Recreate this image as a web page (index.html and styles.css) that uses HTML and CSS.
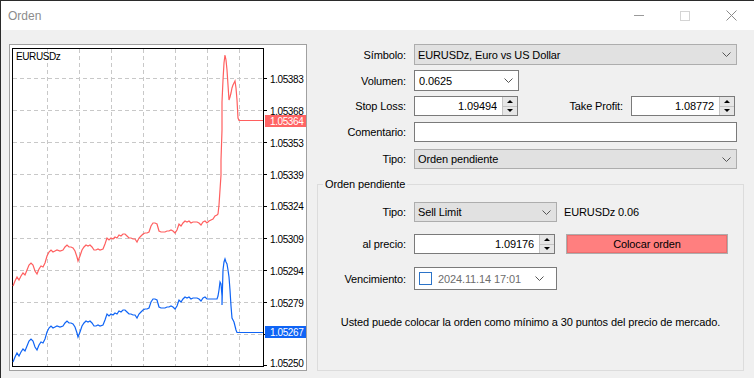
FILE: index.html
```html
<!DOCTYPE html>
<html lang="es">
<head>
    <meta charset="UTF-8">
    <meta name="viewport" content="width=device-width, initial-scale=1.0">
    <title>Orden</title>
    <link rel="stylesheet" href="styles.css">
</head>
<body>
    <div class="window">
        <header class="titlebar">
            <span class="title">Orden</span>
            <div class="window-controls">
                <span class="win-btn"><span class="icon-min"></span></span>
                <span class="win-btn"><span class="icon-max"></span></span>
                <span class="win-btn">
                    <svg width="11" height="11" viewBox="0 0 11 11"><path d="M0.5 0.5 L10.5 10.5 M10.5 0.5 L0.5 10.5" stroke="#8a8a8a" fill="none"/></svg>
                </span>
            </div>
        </header>

        <div class="content">
            <!-- mini chart -->
            <div class="chart-frame">
                <svg class="chart" width="296" height="325" viewBox="10 45 296 325">
                    <g stroke="#c8c8c8" stroke-dasharray="4 3">
                        <line x1="47.5" y1="49" x2="47.5" y2="366"/>
                        <line x1="79.5" y1="49" x2="79.5" y2="366"/>
                        <line x1="111.5" y1="49" x2="111.5" y2="366"/>
                        <line x1="143.5" y1="49" x2="143.5" y2="366"/>
                        <line x1="175.5" y1="49" x2="175.5" y2="366"/>
                        <line x1="207.5" y1="49" x2="207.5" y2="366"/>
                        <line x1="239.5" y1="49" x2="239.5" y2="366"/>
                        <line x1="13" y1="78.5" x2="263" y2="78.5"/>
                        <line x1="13" y1="110.5" x2="263" y2="110.5"/>
                        <line x1="13" y1="142.5" x2="263" y2="142.5"/>
                        <line x1="13" y1="174.5" x2="263" y2="174.5"/>
                        <line x1="13" y1="206.5" x2="263" y2="206.5"/>
                        <line x1="13" y1="238.5" x2="263" y2="238.5"/>
                        <line x1="13" y1="270.5" x2="263" y2="270.5"/>
                        <line x1="13" y1="302.5" x2="263" y2="302.5"/>
                        <line x1="13" y1="334.5" x2="263" y2="334.5"/>
                    </g>
                    <rect x="12.5" y="48.5" width="251" height="318" fill="none" stroke="#000"/>
                    <path d="M264 78.5h3M264 110.5h3M264 142.5h3M264 174.5h3M264 206.5h3M264 238.5h3M264 270.5h3M264 302.5h3M264 334.5h3M264 365.5h3" stroke="#000"/>
                    <text class="chart-symbol" x="16" y="59.5">EURUSDz</text>

                    <polyline class="ask" points="13,286 15,281 17,277 19,280 21,276 23,273 25,275 27,270 29,265 31,263 33,265 35,271 37,274 39,269 41,266 43,267 45,263 47,256 49,252 51,250 53,252 55,251 57,250 60,251 63,250 65,247 67,245 69,247 71,247 73,248 75,251 77,257 78,261 80,256 82,250 84,247 86,245 88,246 90,245 92,247 94,250 96,250 98,249 100,250 103,249 105,244 107,238 109,240 111,238 113,239 115,237 117,238 119,235 121,236 123,234 125,234 127,236 129,238 131,238 133,239 135,239 137,242 139,238 141,236 143,234 145,233 147,233 149,232 151,226 153,223 155,223 157,224 159,231 161,232 163,232 165,232 167,231 169,231 171,230 173,231 175,233 177,230 179,224 181,226 183,223 185,221 187,222 189,221 191,223 193,222 195,222 197,222 199,223 201,225 203,222 205,221 207,223 209,221 211,220 213,219 215,216 217,215 218,214 219,205 220,190 221,175 221,160 222,130 222,102 223,80 224,63 225,55 226,60 227,70 228,85 229,100 230,97 231,93 232,88 233,85 234,83 235,81 236,88 237,100 238,118 239,120.5 263,120.5"/>
                    <polyline class="bid" points="13,362 15,357 17,353 19,356 21,352 23,349 25,351 27,346 29,341 31,339 33,341 35,347 37,350 39,345 41,342 43,343 45,339 47,332 49,328 51,326 53,328 55,327 57,326 60,327 63,326 65,323 67,321 69,323 71,323 73,324 75,327 77,333 78,337 80,332 82,326 84,323 86,321 88,322 90,321 92,323 94,326 96,326 98,325 100,326 103,325 105,320 107,314 109,316 111,314 113,315 115,313 117,314 119,311 121,312 123,310 125,310 127,312 129,314 131,314 133,315 135,315 137,318 139,314 141,312 143,310 145,309 147,309 149,308 151,302 153,299 155,299 157,300 159,307 161,308 163,308 165,308 167,307 169,307 171,306 173,307 175,309 177,306 179,300 181,302 183,299 185,297 187,298 189,297 191,299 193,298 195,298 197,298 199,299 201,301 203,298 205,297 207,299 209,299 211,299 213,299 215,299 217,299 218,296 219,290 220,282 221,284 222,296 222,305 223,270 224,262 225,259 226,262 227,264 228,270 229,277 230,290 231,306 232,318 233,320 234,322 235,326 236,330 237,332.5 263,332.5"/>

                    <g class="price-axis">
                        <text x="270" y="82.5">1.05383</text>
                        <text x="270" y="114.5">1.05368</text>
                        <text x="270" y="146.5">1.05353</text>
                        <text x="270" y="178.5">1.05339</text>
                        <text x="270" y="209.5">1.05324</text>
                        <text x="270" y="242.5">1.05309</text>
                        <text x="270" y="274.5">1.05294</text>
                        <text x="270" y="306.5">1.05279</text>
                        <text x="270" y="366.5">1.05250</text>
                    </g>
                    <rect x="265" y="115" width="41" height="12" fill="#ff6464"/>
                    <text class="price-tag" x="270" y="124.5">1.05364</text>
                    <rect x="265" y="326" width="41" height="12" fill="#0f64f5"/>
                    <text class="price-tag" x="270" y="335.5">1.05267</text>
                </svg>
            </div>

            <form class="order-form">
                <div class="row row-symbol">
                    <label>Símbolo:</label>
                    <div class="select">
                        <span>EURUSDz, Euro vs US Dollar</span>
                        <svg class="chev" width="9" height="5" viewBox="0 0 9 5"><path d="M0.5 0.5L4.5 4.5L8.5 0.5" fill="none" stroke="#555"/></svg>
                    </div>
                </div>

                <div class="row row-volume">
                    <label>Volumen:</label>
                    <div class="select combo">
                        <span>0.0625</span>
                        <svg class="chev" width="9" height="5" viewBox="0 0 9 5"><path d="M0.5 0.5L4.5 4.5L8.5 0.5" fill="none" stroke="#555"/></svg>
                    </div>
                </div>

                <div class="row row-stops">
                    <label>Stop Loss:</label>
                    <div class="stops">
                        <div class="spin-field">
                            <input type="text" value="1.09494">
                            <span class="spin"><span class="up"></span><span class="down"></span></span>
                        </div>
                        <label class="tp-label">Take Profit:</label>
                        <div class="spin-field tp-field">
                            <input type="text" value="1.08772">
                            <span class="spin"><span class="up"></span><span class="down"></span></span>
                        </div>
                    </div>
                </div>

                <div class="row row-comment">
                    <label>Comentario:</label>
                    <input type="text" class="text-field">
                </div>

                <div class="row row-type">
                    <label>Tipo:</label>
                    <div class="select">
                        <span>Orden pendiente</span>
                        <svg class="chev" width="9" height="5" viewBox="0 0 9 5"><path d="M0.5 0.5L4.5 4.5L8.5 0.5" fill="none" stroke="#555"/></svg>
                    </div>
                </div>

                <fieldset class="pending">
                    <legend>Orden pendiente</legend>

                    <div class="row row-ptype">
                        <label>Tipo:</label>
                        <div class="inline">
                            <div class="select select-short">
                                <span>Sell Limit</span>
                                <svg class="chev" width="9" height="5" viewBox="0 0 9 5"><path d="M0.5 0.5L4.5 4.5L8.5 0.5" fill="none" stroke="#555"/></svg>
                            </div>
                            <span class="lot-info">EURUSDz 0.06</span>
                        </div>
                    </div>

                    <div class="row row-price">
                        <label>al precio:</label>
                        <div class="inline">
                            <div class="spin-field price-field">
                                <input type="text" value="1.09176">
                                <span class="spin"><span class="up"></span><span class="down"></span></span>
                            </div>
                            <button type="button" class="place-btn">Colocar orden</button>
                        </div>
                    </div>

                    <div class="row row-expiry">
                        <label>Vencimiento:</label>
                        <div class="date-field">
                            <span class="checkbox"></span>
                            <span class="date">2024.11.14 17:01</span>
                            <svg class="chev" width="9" height="5" viewBox="0 0 9 5"><path d="M0.5 0.5L4.5 4.5L8.5 0.5" fill="none" stroke="#555"/></svg>
                        </div>
                    </div>

                    <p class="note">Usted puede colocar la orden como mínimo a 30 puntos del precio de mercado.</p>
                </fieldset>
            </form>
        </div>
    </div>
</body>
</html>
```

FILE: styles.css
```css
:root {
    --face: #f0f0f0;
    --border-dark: #7a7a7a;
    --border-light: #adadad;
    --select-bg: #e1e1e1;
    --muted-text: #6d6d6d;
    --ask-color: #ff5f5f;
    --bid-color: #0f64f5;
}

* {
    margin: 0;
    padding: 0;
    box-sizing: border-box;
}

body {
    font-family: "Liberation Sans", Arial, sans-serif;
    font-size: 11px;
    letter-spacing: -0.12px;
    line-height: 14px;
    color: #000;
    background: var(--face);
}

.window {
    width: 754px;
    height: 378px;
    border-top: 1px solid #2b2b2b;
    border-left: 1px solid #2b2b2b;
    background: var(--face);
    display: flex;
    flex-direction: column;
    overflow: hidden;
}

.titlebar {
    height: 29px;
    flex-shrink: 0;
    background: #fff;
    display: flex;
    align-items: center;
    justify-content: space-between;
}

.title {
    padding-left: 7px;
    font-size: 12px;
    letter-spacing: 0;
    color: #8c8c8c;
}

.window-controls {
    display: flex;
    height: 100%;
}

.win-btn {
    width: 46px;
    display: flex;
    align-items: center;
    justify-content: center;
}

.icon-min {
    width: 10px;
    height: 1px;
    background: #9a9a9a;
}

.icon-max {
    width: 10px;
    height: 10px;
    border: 1px solid #d4d4d4;
}

.content {
    flex: 1;
    display: flex;
    align-items: flex-start;
}

/* chart */
.chart-frame {
    margin: 14px 0 0 8px;
    width: 298px;
    height: 327px;
    border: 1px solid #a0a0a0;
    background: #fff;
}

.chart {
    display: block;
}

.chart text {
    font-family: "Liberation Sans", Arial, sans-serif;
    font-size: 10px;
    letter-spacing: -0.4px;
    fill: #000;
}

.chart .price-tag {
    fill: #fff;
}

.ask, .bid {
    fill: none;
    stroke-width: 1.2;
    stroke-linejoin: miter;
}

.ask {
    stroke: var(--ask-color);
}

.bid {
    stroke: var(--bid-color);
}

/* form */
.order-form {
    margin: 14px 0 0 10px;
    width: 427px;
}

.row {
    display: grid;
    grid-template-columns: 89px 1fr;
    column-gap: 8px;
    align-items: center;
    height: 20px;
    margin-right: 7px;
}

.row > label {
    text-align: right;
    white-space: nowrap;
}

.row-symbol, .row-volume {
    height: 21px;
}

.row-volume, .row-stops {
    margin-top: 5px;
}

.row-comment {
    margin-top: 6px;
}

.row-type {
    margin-top: 7px;
}

.select {
    height: 100%;
    display: flex;
    align-items: center;
    justify-content: space-between;
    padding: 0 5px 0 3px;
    background: var(--select-bg);
    border: 1px solid var(--border-light);
    white-space: nowrap;
}

.combo {
    width: 105px;
    padding-left: 4px;
    background: #fff;
    border-color: var(--border-dark);
}

.chev {
    display: block;
    flex-shrink: 0;
}

.stops, .inline {
    display: flex;
    align-items: center;
    height: 100%;
}

.spin-field {
    width: 104px;
    height: 20px;
    display: flex;
    border: 1px solid var(--border-dark);
    background: #fff;
}

.spin-field input, .text-field {
    font: inherit;
    letter-spacing: inherit;
    color: #000;
    outline: none;
}

.spin-field input {
    flex: 1;
    min-width: 0;
    border: none;
    background: transparent;
    text-align: right;
    padding-right: 5px;
}

.spin {
    width: 15px;
    display: flex;
    flex-direction: column;
    background: #e6e6e6;
    border-left: 1px solid #c4c4c4;
}

.spin span {
    flex: 1;
    display: flex;
    align-items: center;
    justify-content: center;
}

.spin .up {
    border-bottom: 1px solid #c4c4c4;
}

.spin .up::before, .spin .down::before {
    content: "";
    border-left: 3px solid transparent;
    border-right: 3px solid transparent;
}

.spin .up::before {
    border-bottom: 3px solid #000;
}

.spin .down::before {
    border-top: 3px solid #000;
}

.tp-label {
    flex: 1;
    text-align: right;
    margin-right: 8px;
}

.tp-field {
    margin-right: 2px;
}

.text-field {
    height: 20px;
    width: 100%;
    border: 1px solid var(--border-dark);
    background: #fff;
    padding: 0 4px;
}

/* pending order group */
.pending {
    margin-top: 8px;
    height: 194px;
    border: 1px solid #dcdcdc;
    min-width: 0;
}

.pending legend {
    margin-left: 5px;
    padding: 0 2px;
    line-height: 14px;
}

.pending .row {
    grid-template-columns: 88px 1fr;
    margin-right: 0;
}

.row-ptype {
    margin-top: 11px;
}

.row-price {
    margin-top: 12px;
}

.row-expiry {
    margin-top: 13px;
}

.pending .row-expiry {
    height: 23px;
}

.select-short {
    width: 143px;
}

.lot-info {
    margin-left: 7px;
}

.price-field {
    width: 141px;
}

.place-btn {
    width: 162px;
    height: 20px;
    margin-left: 11px;
    border: 1px solid #adadad;
    background: #ff7f7f;
    box-shadow: inset 0 0 0 1px #ec6e6e;
    font: inherit;
    letter-spacing: inherit;
    color: #000;
}

.date-field {
    width: 143px;
    height: 100%;
    display: flex;
    align-items: center;
    padding: 0 12px 0 4px;
    background: #fff;
    border: 1px solid var(--border-dark);
}

.checkbox {
    width: 13px;
    height: 13px;
    border: 1px solid #2b73c8;
    background: #fff;
}

.date {
    margin-left: 6px;
    color: var(--muted-text);
}

.date-field .chev {
    margin-left: auto;
}

.note {
    margin-top: 25px;
    text-align: center;
}
```
